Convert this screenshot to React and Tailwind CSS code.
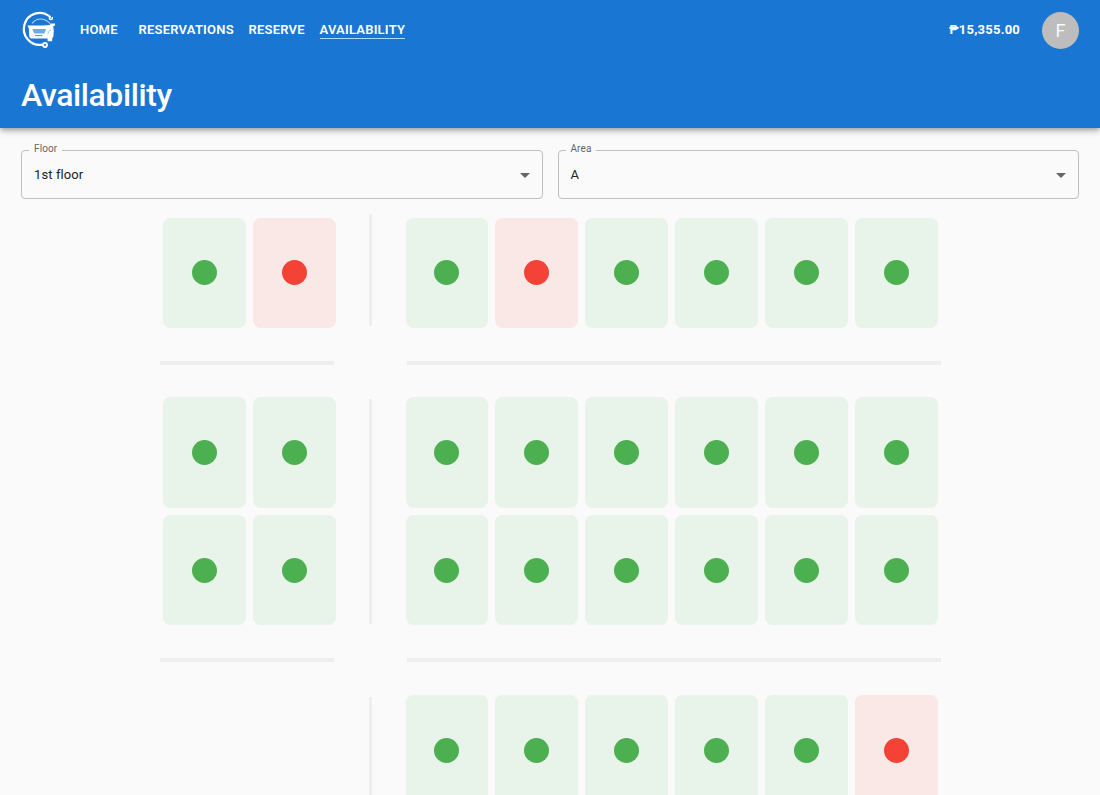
const LANES = [
  { left: ['g', 'r'], right: ['g', 'r', 'g', 'g', 'g', 'g'] },
  { left: ['g', 'g', 'g', 'g'], right: Array(12).fill('g') },
  { left: [], right: ['g', 'g', 'g', 'g', 'g', 'r'] },
];

function Logo() {
  return (
    <svg viewBox="0 0 50 50" className="mb-[2px] h-[50px] w-[50px] shrink-0" fill="none" stroke="#fff" aria-label="Logo">
      <path d="M36 12.8A15.8 16 0 1 0 28.6 40.6" strokeWidth="2.2" strokeLinecap="round" />
      <path d="M35.8 13.2Q34.8 15.4 37 15.6Q38.8 15.2 38.2 13.6" strokeWidth="1.5" strokeLinecap="round" />
      <circle cx="31" cy="41" r="2" strokeWidth="1.8" />
      <path d="M18.2 19.4Q20.6 15.8 24 15.2Q31.5 14.2 36.6 20" stroke="#b4d6f5" strokeWidth="1.1" />
      <path
        d="M13.4 21.4Q25 21.8 35.4 21L37.6 19.4L41 19.4V21.2L39.2 22.4Q40.4 27 39.4 32.6L38.2 34.4V37.2H33.6V34.6H17.6Q15.3 34.4 15.2 32.2L14.9 24.4Z"
        fill="#fff"
        stroke="none"
      />
      <path d="M18.4 25H32.2L30.4 29.4H20.2Z" fill="#6faae6" stroke="none" />
      <path d="M21 31.6H28.5" stroke="#4c95dd" strokeWidth="1.1" />
      <path d="M33.8 30.4Q34 27 37 25.6" stroke="#8dbcec" strokeWidth=".8" />
    </svg>
  );
}

function Field({ label, value }) {
  return (
    <fieldset className="h-[55px] min-w-0 flex-1 rounded-[4px] border border-[#bfbfbf] pl-[7px]">
      <legend className="px-[5px] text-[10px] leading-[12px] tracking-[0.1px] text-[#666]">
        <span className="relative -top-[0.6px]">{label}</span>
      </legend>
      <div className="flex h-[36px] items-center justify-between pt-[1px] pr-[12px] pl-[5px] text-[13px] tracking-[0.1px] text-[#222]">
        <span>{value}</span>
        <svg viewBox="0 0 10 5" className="mt-[2px] h-[5px] w-[10px]" fill="#666"><path d="M0 0H10L5 5Z" /></svg>
      </div>
    </fieldset>
  );
}

function Slot({ status }) {
  const free = status === 'g';
  return (
    <div className={`flex h-[110.3px] w-[82.6px] items-center justify-center rounded-[7.5px] ${free ? 'bg-[#e8f3e9]' : 'bg-[#fae8e6]'}`}>
      <span className={`h-[25px] w-[25px] rounded-full ${free ? 'bg-[#4caf50]' : 'bg-[#f44336]'}`} />
    </div>
  );
}

function Slots({ items, className }) {
  return (
    <div className={`flex flex-wrap content-start gap-[7.3px] ${className}`}>
      {items.map((s, i) => <Slot key={i} status={s} />)}
    </div>
  );
}

export default function App() {
  return (
    <div className="flex h-[795px] flex-col overflow-hidden bg-[#fafafa] font-['Roboto',sans-serif]">
      <header className="z-10 h-[128px] shrink-0 bg-[#1976d2] text-white shadow-[0_2px_4px_-1px_rgba(0,0,0,.2),0_4px_5px_0_rgba(0,0,0,.14),0_1px_10px_0_rgba(0,0,0,.12)]">
        <div className="flex h-[60px] items-center pr-[21px] pl-[14px]">
          <Logo />
          <nav className="ml-[16px] flex text-[13px] leading-[17px] font-semibold tracking-[0.22px]">
            <a className="w-[58.5px]">HOME</a>
            <a className="w-[110px]">RESERVATIONS</a>
            <a className="w-[71px]">RESERVE</a>
            <a className="border-b border-[#a9dcff]">AVAILABILITY</a>
          </nav>
          <span className="ml-auto text-[13px] font-bold tracking-[0.22px]">₱15,355.00</span>
          <div className="ml-[22px] flex h-[37px] w-[37px] items-center justify-center rounded-full bg-[#bdbdbd] text-[18px] text-[#fafafa]">F</div>
        </div>
        <h1 className="pt-[15px] pl-[21px] text-[32px] leading-[40px] font-medium tracking-[-0.42px]">Availability</h1>
      </header>
      <main className="flex flex-col">
        <div className="flex gap-[15px] px-[21px] pt-[16px]">
          <Field label="Floor" value="1st floor" />
          <Field label="Area" value="A" />
        </div>
        <div className="flex flex-col pt-[18.5px] pl-[160px]">
          {LANES.map((lane, i) => (
            <section key={i} className="flex flex-col">
              <div className="flex">
                <Slots items={lane.left} className="ml-[3.4px] w-[173px]" />
                <div className={`ml-[32.5px] w-[3.6px] bg-[#eee] ${i === 0 ? '-mt-[3.5px] mb-[1.8px]' : 'mt-[2px] mb-[1.5px]'}`} />
                <Slots items={lane.right} className="ml-[33.1px] w-[534px]" />
              </div>
              <div className="flex gap-[73.4px] pt-[32.8px] pb-[32.8px]">
                <div className="h-[4px] w-[174px] bg-[#eee]" />
                <div className="h-[4px] w-[534px] bg-[#eee]" />
              </div>
            </section>
          ))}
        </div>
      </main>
    </div>
  );
}
